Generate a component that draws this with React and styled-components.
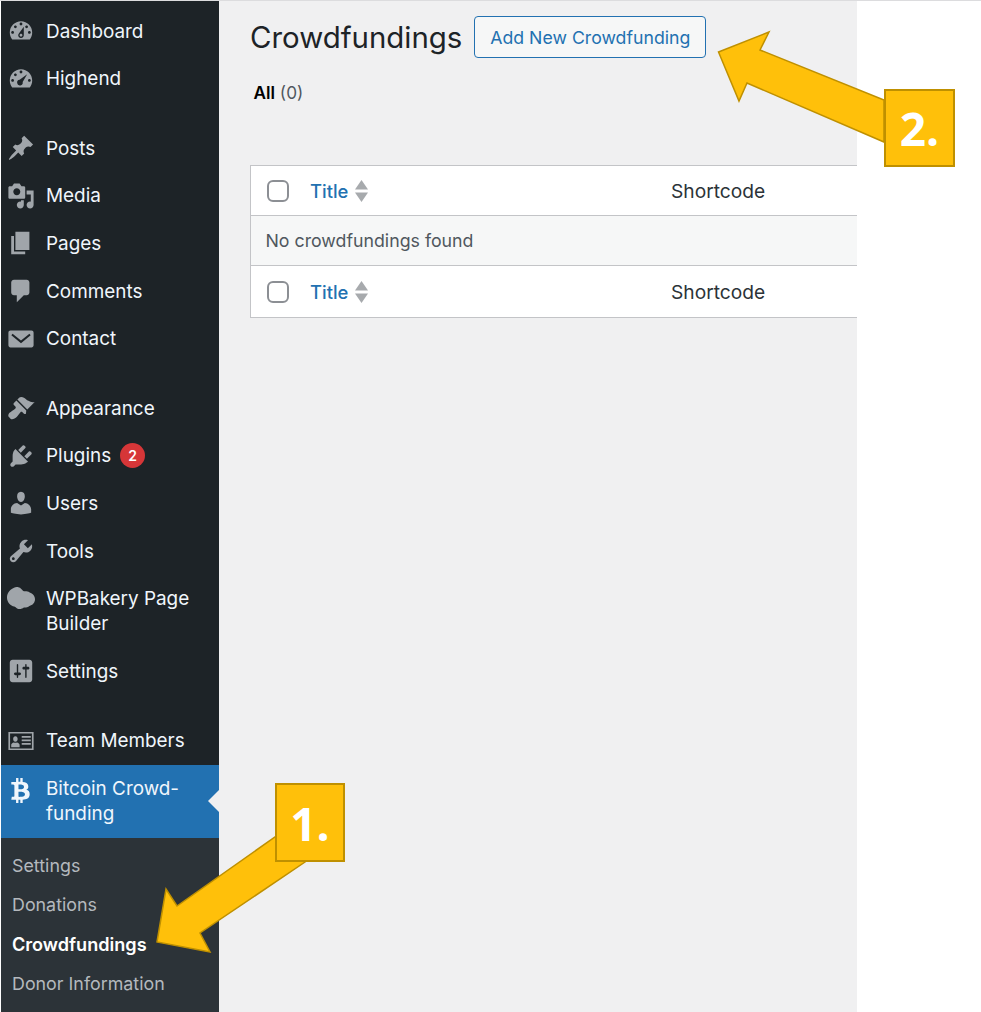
import React from "react"
import styled, { createGlobalStyle } from "styled-components"
import { FaBtc } from "react-icons/fa"

const GlobalStyle = createGlobalStyle`
  html, body {
    margin: 0;
    padding: 0;
    background: #fff;
  }
  * {
    box-sizing: border-box;
  }
`

const gauge =
  "M3.76 16h12.48c1.1-1.37 1.76-3.11 1.76-5 0-4.42-3.58-8-8-8s-8 3.58-8 8c0 1.89.66 3.63 1.76 5zM10 4c.55 0 1 .45 1 1s-.45 1-1 1-1-.45-1-1 .45-1 1-1zM6 6c.55 0 1 .45 1 1s-.45 1-1 1-1-.45-1-1 .45-1 1-1zm8 0c.55 0 1 .45 1 1s-.45 1-1 1-1-.45-1-1 .45-1 1-1zm-5.37 5.55L12 7v6c0 1.1-.9 2-2 2s-2-.9-2-2c0-.57.24-1.08.63-1.45zM4 10c.55 0 1 .45 1 1s-.45 1-1 1-1-.45-1-1 .45-1 1-1zm12 0c.55 0 1 .45 1 1s-.45 1-1 1-1-.45-1-1 .45-1 1-1zm-5 3c0-.55-.45-1-1-1s-1 .45-1 1 .45 1 1 1 1-.45 1-1z"

const icons = {
  dashboard: <path fillRule="evenodd" d={gauge} />,
  highend: (
    <path
      fillRule="evenodd"
      d="M3.76 16h12.48c1.1-1.37 1.76-3.11 1.76-5 0-4.42-3.58-8-8-8s-8 3.58-8 8c0 1.89.66 3.63 1.76 5zM10 4c.55 0 1 .45 1 1s-.45 1-1 1-1-.45-1-1 .45-1 1-1zM6 6c.55 0 1 .45 1 1s-.45 1-1 1-1-.45-1-1 .45-1 1-1zM4 10c.55 0 1 .45 1 1s-.45 1-1 1-1-.45-1-1 .45-1 1-1zm12 0c.55 0 1 .45 1 1s-.45 1-1 1-1-.45-1-1 .45-1 1-1zM14.4 6.6L11.2 12.2a2 2 0 1 1-2.2-1.6z"
    />
  ),
  posts: (
    <path d="M10.44 3.02l1.82-1.82 6.36 6.35-1.83 1.82c-1.05-.68-2.48-.57-3.41.36l-.75.75c-.92.93-1.04 2.35-.35 3.41l-1.83 1.82-2.41-2.41-2.8 2.79c-.42.42-3.38 2.71-3.8 2.29s1.86-3.39 2.28-3.81l2.79-2.79L4.1 9.36l1.83-1.82c1.05.69 2.48.57 3.4-.36l.75-.75c.93-.92 1.05-2.35.36-3.41z" />
  ),
  media: (
    <path
      fillRule="evenodd"
      d="M13 11V4c0-.55-.45-1-1-1h-1.67L9 1H5L3.67 3H2c-.55 0-1 .45-1 1v7c0 .55.45 1 1 1h10c.55 0 1-.45 1-1zM7 4.5c1.38 0 2.5 1.12 2.5 2.5S8.38 9.5 7 9.5 4.5 8.38 4.5 7 5.62 4.5 7 4.5zM14 6h5v10.5c0 1.38-1.12 2.5-2.5 2.5S14 17.88 14 16.5s1.12-2.5 2.5-2.5c.17 0 .34.02.5.05V9h-3V6zm-4 8.05V13h2v3.5c0 1.38-1.12 2.5-2.5 2.5S7 17.88 7 16.5 8.12 14 9.5 14c.17 0 .34.02.5.05z"
    />
  ),
  pages: <path d="M6 15V2h10v13H6zm-1 1h8v2H3V5h2v11z" />,
  comments: (
    <path d="M5 2h9c1.1 0 2 .9 2 2v7c0 1.1-.9 2-2 2h-2l-5 5v-5H5c-1.1 0-2-.9-2-2V4c0-1.1.9-2 2-2z" />
  ),
  contact: (
    <path
      fillRule="evenodd"
      d="M19 14.5v-9c0-.83-.67-1.5-1.5-1.5H2.5C1.67 4 1 4.67 1 5.5v9c0 .83.67 1.5 1.5 1.5h15c.83 0 1.5-.67 1.5-1.5zM4 6.3l6 4.7 6-4.7.9 1.1L10 13 3.1 7.4z"
    />
  ),
  appearance: (
    <path d="M14.48 11.06L7.41 3.99l1.5-1.5c.5-.56 2.3-.47 3.51.32 1.21.8 1.43 1.28 2.91 2.1 1.18.64 2.45 1.26 4.45.85zm-.71.71L6.7 4.7 4.93 6.47c-.39.39-.39 1.02 0 1.41l1.06 1.06c.39.39.39 1.03 0 1.42-.6.6-1.43 1.11-2.21 1.69-.35.26-.7.53-1.01.84C1.43 13.23.5 15.2 1.2 16.3l1.5 1.5c1.1.7 3.07-.23 4.4-1.57.31-.31.58-.66.84-1.01.58-.78 1.09-1.61 1.69-2.21.39-.39 1.03-.39 1.42 0l1.06 1.06c.39.39 1.02.39 1.41 0z" />
  ),
  plugins: (
    <path d="M13.11 4.36L9.87 7.6 8 5.73l3.24-3.24c.35-.34 1.05-.2 1.56.32.52.51.66 1.21.31 1.55zm-8 1.77l.91-1.12 9.01 9.01-1.19.84c-.71.71-2.63 1.16-3.82 1.16H6.14L4.9 17.26c-.59.59-1.54.59-2.12 0-.59-.58-.59-1.53 0-2.12l1.24-1.24v-3.88c0-1.13.4-3.19 1.09-3.89zm7.26 3.97l3.24-3.24c.34-.35 1.04-.21 1.55.31.52.51.66 1.21.31 1.55l-3.24 3.25z" />
  ),
  users: (
    <path d="M10 9.25c-2.27 0-2.73-3.44-2.73-3.44C7 4.02 7.82 2 9.97 2c2.16 0 2.98 2.02 2.71 3.81 0 0-.41 3.44-2.68 3.44zm0 2.57L12.72 10c2.39 0 4.52 2.33 4.52 4.53v2.49s-3.65 1.13-7.24 1.13c-3.65 0-7.24-1.13-7.24-1.13v-2.49c0-2.25 1.94-4.48 4.47-4.48z" />
  ),
  tools: (
    <path
      fillRule="evenodd"
      d="M16.68 9.77c-1.34 1.34-3.3 1.67-4.95.99l-5.41 6.52c-.99.99-2.59.99-3.58 0s-.99-2.59 0-3.57l6.52-5.42c-.68-1.65-.35-3.61.99-4.95 1.28-1.28 3.12-1.62 4.72-1.06l-2.89 2.89 2.82 2.82 2.86-2.87c.53 1.58.18 3.39-1.08 4.65zM3.81 16.21c.4.39 1.04.39 1.43 0 .4-.4.4-1.04 0-1.43-.39-.4-1.03-.4-1.43 0-.39.39-.39 1.03 0 1.43z"
    />
  ),
  cloud: (
    <path d="M5 1.2c1.6-.7 3.6-.5 5 .7 1.2 1.1 1.6 1.9 3 1.9 1.2 0 2.2.2 3.2.8 2.2.7 3.8 2.5 3.8 4.8 0 2.4-1.7 4.3-4 4.8-1 .9-2.5 1.3-4 1.2-1.2 1.1-3.4 1.4-4.8.6-.8-.4-1.3-1-2-1.3C2.6 14.2.1 11.7 0 8.6-.1 6.4.7 3 5 1.2z" />
  ),
  settings: (
    <path
      fillRule="evenodd"
      d="M18 16V4c0-1.1-.9-2-2-2H4c-1.1 0-2 .9-2 2v12c0 1.1.9 2 2 2h12c1.1 0 2-.9 2-2zM8 11h1c.55 0 1 .45 1 1s-.45 1-1 1H8v1.5c0 .28-.22.5-.5.5s-.5-.22-.5-.5V13H6c-.55 0-1-.45-1-1s.45-1 1-1h1V5.5c0-.28.22-.5.5-.5s.5.22.5.5V11zm5-2h-1c-.55 0-1-.45-1-1s.45-1 1-1h1V5.5c0-.28.22-.5.5-.5s.5.22.5.5V7h1c.55 0 1 .45 1 1s-.45 1-1 1h-1v5.5c0 .28-.22.5-.5.5s-.5-.22-.5-.5V9z"
    />
  ),
  team: (
    <path
      fillRule="evenodd"
      d="M1 3.5h18v13H1zM2.2 4.7v10.6h15.6V4.7zM3 14.5v-1.7c0-1 .9-1.5 1.9-1.8.5.3 1.7.3 2.2 0 1 .3 1.9.8 1.9 1.8v1.7zM6 10.5c-1 0-1.6-.8-1.6-1.9S5 6.6 6 6.6s1.6.9 1.6 2-.6 1.9-1.6 1.9zM10.5 6.5H17v1.2h-6.5zM10.5 9h6.5v1.2h-6.5zM10.5 11.5H17v1.2h-6.5z"
    />
  ),
}

const topMenu = [
  [
    { name: "Dashboard", icon: "dashboard" },
    { name: "Highend", icon: "highend" },
  ],
  [
    { name: "Posts", icon: "posts" },
    { name: "Media", icon: "media" },
    { name: "Pages", icon: "pages" },
    { name: "Comments", icon: "comments" },
    { name: "Contact", icon: "contact" },
  ],
  [
    { name: "Appearance", icon: "appearance" },
    { name: "Plugins", icon: "plugins", badge: 2 },
    { name: "Users", icon: "users" },
    { name: "Tools", icon: "tools" },
    { name: "WPBakery Page Builder", icon: "cloud", tall: true },
    { name: "Settings", icon: "settings" },
  ],
]

const subMenu = [
  { name: "Settings" },
  { name: "Donations" },
  { name: "Crowdfundings", current: true },
  { name: "Donor Information" },
]

function MenuIcon({ name }) {
  return (
    <IconSvg viewBox="0 0 20 20" fill="currentColor">
      {icons[name]}
    </IconSvg>
  )
}

function TableHead({ height }) {
  return (
    <HeadRow $height={height}>
      <CheckCell>
        <CheckBox />
      </CheckCell>
      <TitleCell>
        <TitleLink>Title</TitleLink>
        <SortArrows viewBox="0 0 13 22" fill="#a7aaad">
          <path d="M6.5 0L13 9.5H0z" />
          <path d="M0 12.5h13L6.5 22z" />
        </SortArrows>
      </TitleCell>
      <Shortcode>Shortcode</Shortcode>
    </HeadRow>
  )
}

export default function App() {
  return (
    <Page>
      <GlobalStyle />
      <Sidebar>
        <MenuTop>
          {topMenu.map((group, i) => (
            <MenuGroup key={i}>
              {group.map((item) => (
                <MenuItem key={item.name} $tall={item.tall}>
                  <IconSlot $tall={item.tall}>
                    <MenuIcon name={item.icon} />
                  </IconSlot>
                  <MenuLabel>
                    {item.name}
                    {item.badge && <Badge>{item.badge}</Badge>}
                  </MenuLabel>
                </MenuItem>
              ))}
            </MenuGroup>
          ))}
          <MenuItem>
            <IconSlot>
              <MenuIcon name="team" />
            </IconSlot>
            <MenuLabel>Team Members</MenuLabel>
          </MenuItem>
        </MenuTop>
        <ActiveItem>
          <IconSlot $tall>
            <FaBtc size={25} color="#f0f6fc" />
          </IconSlot>
          <MenuLabel>
            Bitcoin Crowd-
            <br />
            funding
          </MenuLabel>
          <ActiveNotch />
        </ActiveItem>
        <SubMenu>
          {subMenu.map((item) => (
            <SubItem key={item.name} $current={item.current}>
              {item.name}
            </SubItem>
          ))}
        </SubMenu>
      </Sidebar>

      <Main>
        <Heading>
          <Title>Crowdfundings</Title>
          <AddButton>Add New Crowdfunding</AddButton>
        </Heading>
        <Filters>
          <strong>All</strong> <Count>(0)</Count>
        </Filters>
        <ListTable>
          <TableHead height={49} />
          <EmptyRow>No crowdfundings found</EmptyRow>
          <TableHead height={51} />
        </ListTable>
      </Main>

      <ArrowLayer viewBox="0 0 981 1012">
        <polygon
          points="157,942 166,889 177,906 275,837 305,862 200,933 210,952"
          fill="#ffc00a"
          stroke="#bf9000"
          strokeWidth="1.5"
        />
        <polygon
          points="718.5,52 769,32 760,50 884,100 884,142 747,83 739,101"
          fill="#ffc00a"
          stroke="#bf9000"
          strokeWidth="1.5"
        />
      </ArrowLayer>
      <Callout $left={275} $top={783} $width={70} $height={79}>
        1.
      </Callout>
      <Callout $left={884} $top={89} $width={71} $height={78}>
        2.
      </Callout>
    </Page>
  )
}

const Page = styled.div`
  position: relative;
  display: flex;
  width: 981px;
  height: 1012px;
  overflow: hidden;
  background: #fff;
  border-top: 1px solid #dcdcde;
  padding-left: 1px;
  font-family: Inter, "Liberation Sans", sans-serif;
`

const Sidebar = styled.aside`
  display: flex;
  flex-direction: column;
  width: 218px;
  flex-shrink: 0;
  background: #1d2327;
  color: #f0f6fc;
`

const MenuTop = styled.nav`
  display: flex;
  flex-direction: column;
  gap: 22px;
  padding-top: 6.3px;
`

const MenuGroup = styled.div`
  display: flex;
  flex-direction: column;
`

const MenuItem = styled.div`
  display: flex;
  align-items: center;
  height: ${(p) => (p.$tall ? "72.6px" : "47.6px")};
  padding-right: 10px;
`

const IconSlot = styled.div`
  display: flex;
  align-items: ${(p) => (p.$tall ? "flex-start" : "center")};
  justify-content: center;
  width: 45px;
  padding-right: 6px;
  flex-shrink: 0;
  color: #a0a5aa;
  margin-top: ${(p) => (p.$tall ? "-22px" : "0")};
`

const IconSvg = styled.svg`
  width: 28px;
  height: 28px;
  display: block;
`

const MenuLabel = styled.div`
  font-size: 18.9px;
  line-height: 25px;
  font-weight: 400;
  color: #f0f6fc;
`

const Badge = styled.span`
  display: inline-flex;
  align-items: center;
  justify-content: center;
  width: 25px;
  height: 25px;
  margin-left: 9px;
  border-radius: 50%;
  background: #d63638;
  color: #fff;
  font-size: 14px;
  font-weight: 600;
  vertical-align: top;
`

const ActiveItem = styled.div`
  position: relative;
  display: flex;
  align-items: center;
  height: 73.2px;
  background: #2271b1;
  & ${IconSlot} {
    margin-top: -22px;
  }
`

const ActiveNotch = styled.span`
  position: absolute;
  right: 0;
  top: 25px;
  border-style: solid;
  border-width: 11px 11px 11px 0;
  border-color: transparent #f0f0f1 transparent transparent;
`

const SubMenu = styled.div`
  flex: 1;
  display: flex;
  flex-direction: column;
  padding: 8px 0 0 11px;
  background: #2c3338;
`

const SubItem = styled.div`
  height: 39.3px;
  display: flex;
  align-items: center;
  font-size: ${(p) => (p.$current ? "18.1px" : "17.85px")};
  font-weight: ${(p) => (p.$current ? 600 : 400)};
  color: ${(p) => (p.$current ? "#fff" : "#b4b9be")};
`

const Main = styled.main`
  width: 638px;
  flex-shrink: 0;
  padding: 15px 0 0 31px;
  background: #f0f0f1;
  overflow: hidden;
`

const Heading = styled.div`
  display: flex;
  align-items: flex-start;
  gap: 12px;
`

const Title = styled.h1`
  margin: 0;
  padding-top: 1px;
  font-size: 29.4px;
  font-weight: 400;
  line-height: 42px;
  color: #1d2327;
`

const AddButton = styled.button`
  width: 232px;
  height: 42px;
  padding: 0;
  border: 1.5px solid #2271b1;
  border-radius: 4px;
  background: #f6f7f7;
  color: #2271b1;
  font-family: inherit;
  font-size: 17.7px;
`

const Filters = styled.div`
  margin: 22px 0 0 3.5px;
  font-size: 17.2px;
  line-height: 24px;
  color: #000;
  strong {
    font-weight: 600;
  }
`

const Count = styled.span`
  color: #50575e;
`

const ListTable = styled.div`
  width: 700px;
  margin-top: 60px;
  border: 1px solid #c3c4c7;
  background: #fff;
  color: #2c3338;
`

const HeadRow = styled.div`
  display: grid;
  grid-template-columns: 59px 361px 1fr;
  align-items: center;
  height: ${(p) => p.$height}px;
  font-size: 18.4px;
`

const Shortcode = styled.span`
  font-size: 19.2px;
`

const CheckCell = styled.div`
  padding-left: 16px;
`

const CheckBox = styled.div`
  width: 22px;
  height: 22px;
  border: 2px solid #8c8f94;
  border-radius: 6px;
  background: #fff;
`

const TitleCell = styled.div`
  display: flex;
  align-items: center;
  gap: 7px;
`

const TitleLink = styled.span`
  color: #2271b1;
  font-weight: 500;
`

const SortArrows = styled.svg`
  width: 13px;
  height: 22px;
`

const EmptyRow = styled.div`
  display: flex;
  align-items: center;
  height: 51px;
  padding-left: 14.5px;
  border-top: 1px solid #c3c4c7;
  border-bottom: 1px solid #c3c4c7;
  background: #f6f7f7;
  font-size: 17.75px;
  color: #50575e;
`

const ArrowLayer = styled.svg`
  position: absolute;
  left: 0;
  top: -1px;
  width: 981px;
  height: 1012px;
  pointer-events: none;
`

const Callout = styled.div`
  position: absolute;
  left: ${(p) => p.$left}px;
  top: ${(p) => p.$top - 1}px;
  width: ${(p) => p.$width}px;
  height: ${(p) => p.$height}px;
  display: flex;
  align-items: center;
  justify-content: center;
  background: #ffc00a;
  border: 2px solid #bf9000;
  color: #fff;
  font-family: "Open Sans", sans-serif;
  font-size: 46px;
  font-weight: 700;
`
